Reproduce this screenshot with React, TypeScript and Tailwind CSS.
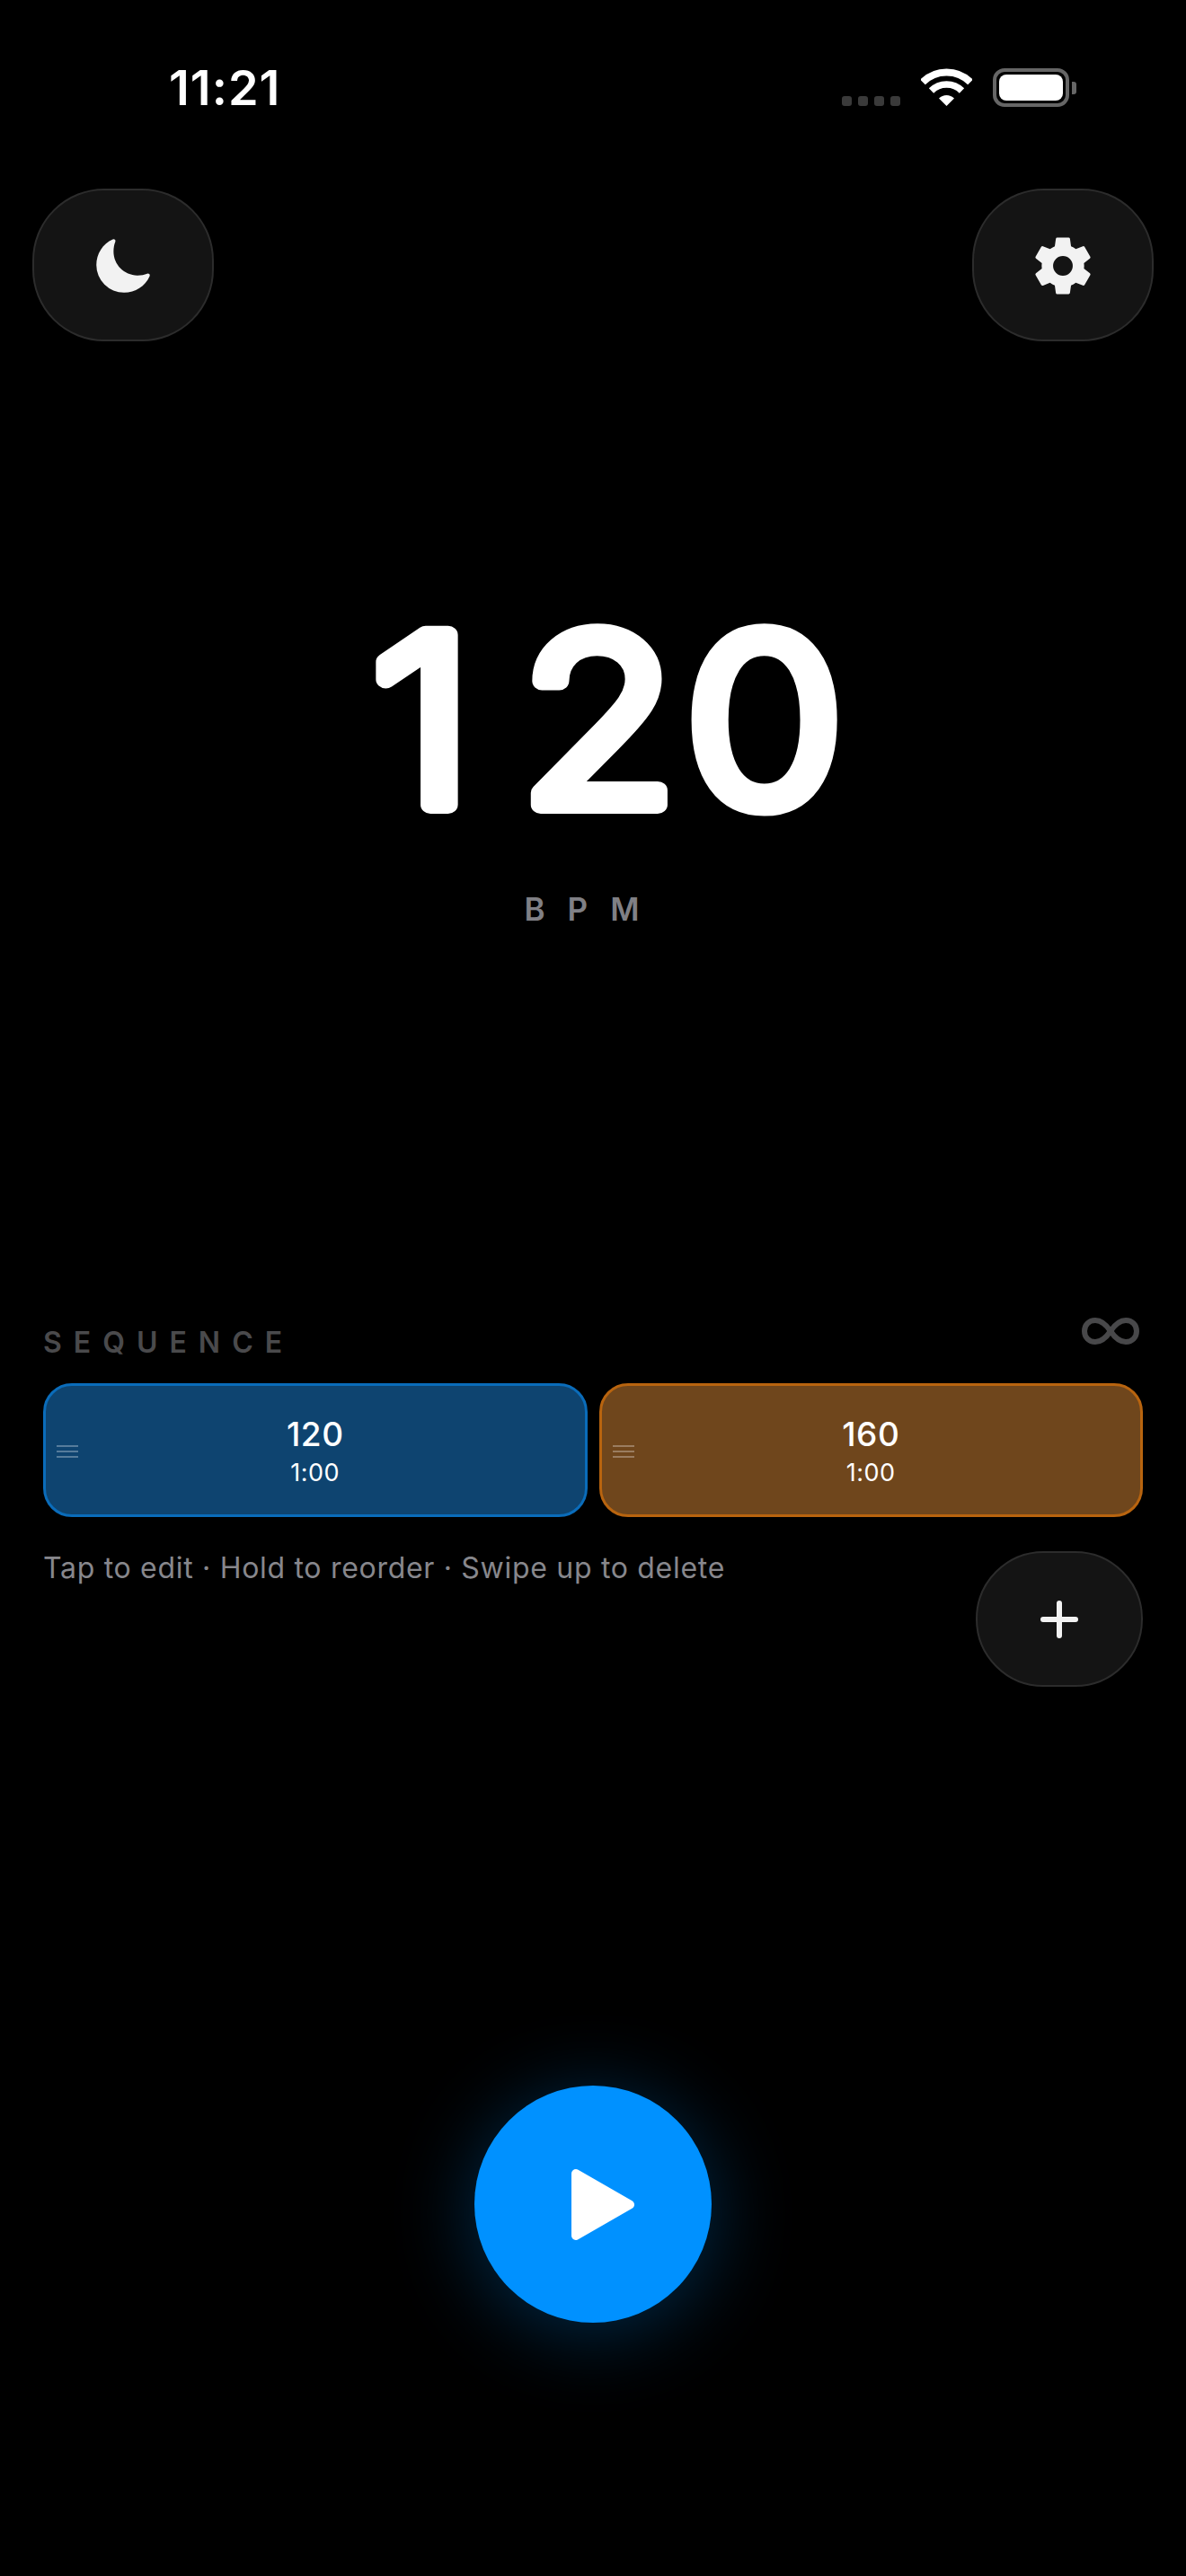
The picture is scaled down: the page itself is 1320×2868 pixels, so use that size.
import { IoMoon, IoSettingsSharp } from "react-icons/io5";

const SignalDots = () => (
  <div className="mt-[36px] flex gap-[7px]">
    {[0, 1, 2, 3].map((i) => (
      <span key={i} className="h-[11px] w-[11px] rounded-[3px] bg-[#3a3a3a]" />
    ))}
  </div>
);

const Wifi = () => (
  <svg width="57" height="42" viewBox="0 0 57 42" fill="none" className="mt-[5px] ml-[23px]">
    <path d="M2 15.5 A37.5 37.5 0 0 1 55 15.5" stroke="white" strokeWidth="8" />
    <path d="M11.5 25 A24 24 0 0 1 45.5 25" stroke="white" strokeWidth="7.5" />
    <path d="M28.5 42 L20 33.5 A12 12 0 0 1 37 33.5 Z" fill="white" />
  </svg>
);

const Battery = () => (
  <div className="mt-[5px] ml-[23px] flex items-center gap-[3px]">
    <div className="h-[43px] w-[85px] rounded-[13px] border-4 border-[#666666] p-[3px]">
      <div className="h-full w-full rounded-[8px] bg-white" />
    </div>
    <div className="h-[14px] w-[5px] rounded-r-[3px] bg-[#666666]" />
  </div>
);

const CircleButton = ({ children, className }: { children: React.ReactNode; className: string }) => (
  <button className={`flex items-center justify-center rounded-[80px] border-2 border-[#2c2c2c] bg-[#141414] ${className}`}>
    {children}
  </button>
);

const DragHandle = () => (
  <div className="absolute top-[66px] left-[12px] flex w-[24px] flex-col gap-[4px]">
    <span className="h-[2px] bg-white/30" />
    <span className="h-[2px] bg-white/30" />
    <span className="h-[2px] bg-white/30" />
  </div>
);

const SequenceCard = ({ bpm, time, className }: { bpm: string; time: string; className: string }) => (
  <div className={`relative flex h-[149px] flex-1 flex-col items-center rounded-[32px] border-[3px] pt-[32px] ${className}`}>
    <DragHandle />
    <span className="text-[37px] leading-[44px] font-medium tracking-[0.5px] text-white">{bpm}</span>
    <span className="mt-[4px] text-[27px] leading-[34px] tracking-[0.5px] text-white">{time}</span>
  </div>
);

export default function App() {
  return (
    <div className="flex min-h-[2868px] w-full flex-col bg-black font-['Inter',sans-serif]">
      <div className="flex h-[210px] items-start justify-between pt-[71px] pr-[122px] pl-[188px]">
        <span className="text-[54px] leading-[54px] font-semibold tracking-[1px] text-white">11:21</span>
        <div className="flex items-start">
          <SignalDots />
          <Wifi />
          <Battery />
        </div>
      </div>

      <div className="flex justify-between px-9">
        <CircleButton className="h-[170px] w-[202px]">
          <IoMoon className="mt-[2px] h-[68px] w-[68px] text-[#f2f2f2]" />
        </CircleButton>
        <CircleButton className="h-[170px] w-[202px]">
          <IoSettingsSharp className="mt-[2px] h-[70px] w-[70px] text-[#f2f2f2]" />
        </CircleButton>
      </div>

      {/* rounded numerals: no rounded font here, so a round-joined stroke on svg text */}
      <svg width="1320" height="360" viewBox="0 0 1320 360" className="mt-[215px] block overflow-visible">
        <text
          x="376 526 693"
          y="301"
          transform="scale(1.1 1)"
          fill="white"
          stroke="white"
          strokeWidth="20"
          strokeLinejoin="round"
          fontSize="260"
          fontWeight="300"
        >
          120
        </text>
      </svg>
      <div className="mt-[35px] text-center text-[35px] leading-[44px] font-semibold tracking-[25px] text-[#808085]">
        BPM
      </div>

      <div className="mt-[433px] px-12">
        <div className="flex h-[43px] items-start justify-between">
          <span className="mt-[10px] text-[32px] leading-[36px] font-semibold tracking-[13px] text-[#4a4a4c]">SEQUENCE</span>
          <svg width="64" height="30" viewBox="0 0 64 30" fill="none" className="mr-[4px]">
            <path
              d="M32 15 C26 6 21 3 15 3 C8 3 3 8 3 15 C3 22 8 27 15 27 C21 27 26 24 32 15 C38 6 43 3 49 3 C56 3 61 8 61 15 C61 22 56 27 49 27 C43 27 38 24 32 15 Z"
              stroke="#48484a"
              strokeWidth="6"
            />
          </svg>
        </div>
        <div className="mt-[30px] flex gap-[13px]">
          <SequenceCard bpm="120" time="1:00" className="border-[#0a6cba] bg-[#0e4470]" />
          <SequenceCard bpm="160" time="1:00" className="border-[#b8640f] bg-[#6f461c]" />
        </div>
        <div className="mt-[38px] flex items-start justify-between">
          <span className="mt-[-1px] text-[32px] leading-[40px] tracking-[0.7px] text-[#87878c]">
            Tap to edit · Hold to reorder · Swipe up to delete
          </span>
          <CircleButton className="h-[151px] w-[186px]">
            <svg width="42" height="42" viewBox="0 0 42 42" fill="none">
              <path d="M21 3 V39 M3 21 H39" stroke="#f2f2f2" strokeWidth="6" strokeLinecap="round" />
            </svg>
          </CircleButton>
        </div>
      </div>

      <div className="mt-[444px] flex justify-center">
        <button className="flex h-[264px] w-[264px] items-center justify-center rounded-full bg-[#0091ff] pl-[22px] shadow-[0_10px_90px_rgba(0,145,255,0.3)]">
          <svg width="70" height="79" viewBox="0 0 70 79" fill="white">
            <path d="M5 5 L65 39.5 L5 74 Z" stroke="white" strokeWidth="10" strokeLinejoin="round" />
          </svg>
        </button>
      </div>
    </div>
  );
}
